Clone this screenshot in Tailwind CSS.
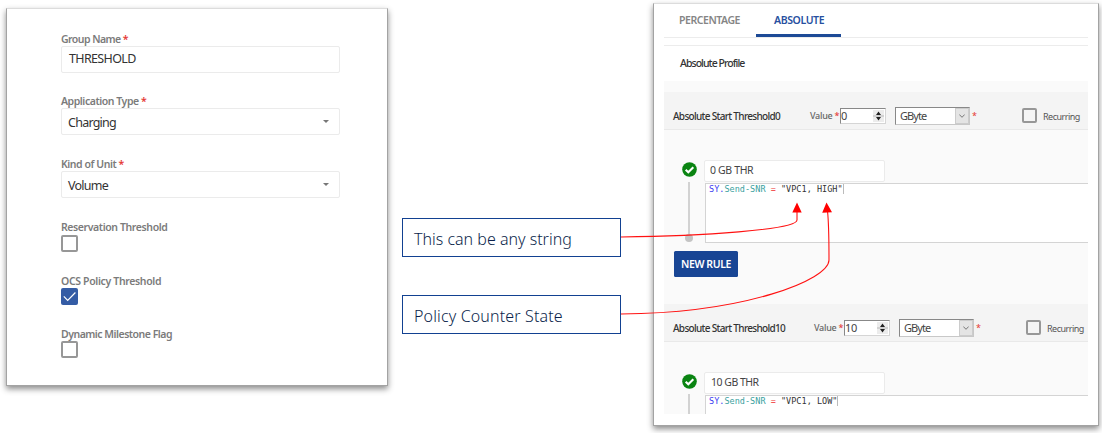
<!DOCTYPE html>
<html lang="en">
<head>
<meta charset="utf-8">
<title>Threshold group</title>
<script src="https://cdn.jsdelivr.net/npm/@tailwindcss/browser@4"></script>
</head>
<body class="relative flex h-[433px] w-[1102px] items-start overflow-hidden bg-white font-['Noto_Sans',sans-serif] whitespace-nowrap">

<!-- Group form -->
<section class="mt-2 ml-1.5 h-[378px] w-[382px] shrink-0 border border-[#a3a3a3] border-t-[#dcdcdc] bg-white pt-[23px] pl-[54px] shadow-[0_3px_6px_rgba(0,0,0,0.45)]">
  <div class="flex h-[62px] flex-col">
    <label class="h-[14px] text-[10.5px] leading-[14px] font-semibold tracking-[-0.55px] text-[#7b7b7b]">Group Name <span class="text-[#e53935]">*</span></label>
    <div class="h-[27px] w-[279px] rounded-[2px] border border-[#ebebeb] pl-[7px] text-[12.5px] leading-[23px] tracking-[-0.65px] text-[#333]">THRESHOLD</div>
  </div>
  <div class="flex h-[63px] flex-col">
    <label class="h-[14px] text-[10.5px] leading-[14px] font-semibold tracking-[-0.45px] text-[#7b7b7b]">Application Type <span class="text-[#e53935]">*</span></label>
    <div class="flex h-[27px] w-[279px] items-center justify-between rounded-[2px] border border-[#ebebeb] pr-2.5 pl-1.5 text-[12.5px] leading-[23px] tracking-[-0.75px] text-[#333]"><span class="pt-0.5">Charging</span><svg class="h-[3px] w-[6px]" viewBox="0 0 6 3"><path d="M0 0h6L3 3z" fill="#777"/></svg></div>
  </div>
  <div class="flex h-[63px] flex-col">
    <label class="h-[14px] text-[10.5px] leading-[14px] font-semibold tracking-[-0.45px] text-[#7b7b7b]">Kind of Unit <span class="text-[#e53935]">*</span></label>
    <div class="flex h-[27px] w-[279px] items-center justify-between rounded-[2px] border border-[#ebebeb] pr-2.5 pl-1.5 text-[12.5px] leading-[23px] tracking-[-0.75px] text-[#333]"><span class="pt-0.5">Volume</span><svg class="h-[3px] w-[6px]" viewBox="0 0 6 3"><path d="M0 0h6L3 3z" fill="#777"/></svg></div>
  </div>
  <div class="flex h-[54px] flex-col">
    <label class="h-[14px] text-[10.5px] leading-[14px] font-semibold tracking-[-0.4px] text-[#7b7b7b]">Reservation Threshold</label>
    <div class="mt-px size-[17px] rounded-[2px] border-2 border-[#979797]"></div>
  </div>
  <div class="flex h-[53px] flex-col">
    <label class="h-[14px] text-[10.5px] leading-[14px] font-semibold tracking-[-0.35px] text-[#7b7b7b]">OCS Policy Threshold</label>
    <div class="size-[17px] rounded-[2px] bg-[#345ca5]"><svg class="size-[17px]" viewBox="0 0 17 17" fill="none" stroke="#fff" stroke-width="1.2"><path d="M2.8 8.3l3.9 4L14.400 4.500"/></svg></div>
  </div>
  <div class="flex flex-col">
    <label class="h-[14px] text-[10.5px] leading-[14px] font-semibold tracking-[-0.5px] text-[#7b7b7b]">Dynamic Milestone Flag</label>
    <div class="size-[17px] rounded-[2px] border-2 border-[#979797]"></div>
  </div>
</section>

<!-- Callouts -->
<div class="mt-[218px] ml-3.5 flex w-[219px] shrink-0 flex-col gap-[38px] text-[16px] leading-[40px] font-light text-[#0b1f4b]">
  <div class="h-[39px] border border-[#124191] pl-[11px]">This can be any string</div>
  <div class="h-[39px] border border-[#124191] pl-[11px] tracking-[0.15px]">Policy Counter State</div>
</div>

<!-- Threshold profile -->
<section class="mt-[3px] ml-8 h-[423px] w-[446px] shrink-0 border border-[#a3a3a3] border-t-[#dcdcdc] bg-white pl-[10px] shadow-[0_3px_6px_rgba(0,0,0,0.45)]">
  <div class="flex h-[410px] w-[424px] flex-col overflow-hidden">
    <nav class="flex h-[34px] shrink-0 border-b border-[#ececec] text-[10.5px] leading-[32px] font-semibold">
      <div class="w-[92px] pl-[15px] tracking-[-0.45px] text-[#858585]">PERCENTAGE</div>
      <div class="h-[33px] w-[85px] border-b-[3px] border-[#1d4a96] pl-[18px] tracking-[-0.4px] text-[#2750a0]">ABSOLUTE</div>
    </nav>
    <div class="mt-[7px] h-9 shrink-0 border-t border-[#ececec] pl-4 text-[10.5px] leading-[35px] font-medium tracking-[-0.95px] text-[#333]">Absolute Profile</div>
    <div class="h-[11px] shrink-0 bg-[#fafafa]"></div>

    <div class="flex h-[38px] shrink-0 items-center border-b border-[#e9e9e9] bg-[#f4f4f4] pt-2.5 text-[10px] leading-4">
      <span class="w-[145px] pl-[9px] font-medium tracking-[-0.68px] text-[#333]">Absolute Start Threshold0</span>
      <span class="w-[31px] pl-px text-[9px] font-medium tracking-[-0.25px] text-[#666]">Value <span class="text-[#e53935]">*</span></span>
      <div class="flex h-4 w-[46px] items-center justify-between border border-[#d5d5d5] border-t-[#888] border-l-[#888] bg-white pr-px text-[11px] leading-[14px] text-[#444]"><span>0</span><svg class="h-3 w-[11px] bg-[#ececec]" viewBox="0 0 11 12" fill="#222"><path d="M5.500 1.500L8 5H3zM5.500 10.500L8 7H3z"/><path d="M0 6h11" stroke="#999" stroke-width=".6"/></svg></div>
      <div class="ml-[9px] flex h-[18px] w-[75px] items-center justify-between border border-[#c8c8c8] border-t-[#888] border-l-[#888] bg-white pl-1 text-[11px] leading-4 tracking-[-0.95px] text-[#444]"><span>GByte</span><span class="flex h-4 w-[14px] items-center justify-center border border-[#ccc] bg-[#e4e4e4]"><svg class="h-1 w-1.5" viewBox="0 0 6 4" fill="none" stroke="#777"><path d="M.3.5L3 3.3 5.700.5"/></svg></span></div>
      <span class="ml-[2px] w-[50px] text-[9px] text-[#e53935]">*</span>
      <div class="size-[15px] rounded-[2px] border-2 border-[#979797]"></div>
      <span class="ml-1.5 pt-0.5 text-[9px] tracking-[-0.5px] text-[#555]">Recurring</span>
    </div>

    <div class="flex h-[174px] shrink-0 flex-col bg-[#fafafa] pt-[30px]">
      <div class="flex">
        <div class="flex w-10 flex-col items-center pl-[10px]">
          <svg class="mt-0.5 h-[15px] w-[15px] shrink-0" viewBox="0 0 15 15"><circle cx="7.500" cy="7.500" r="7.300" fill="#0a8412"/><path d="M3.700 7.700l2.600 2.600 5-5.100" fill="none" stroke="#fff" stroke-width="2.100"/></svg>
          <div class="mt-[5px] h-[53px] w-[2px] bg-[#d2d2d2]"></div>
          <div class="-mt-px size-2 rounded-full bg-[#c4c4c4]"></div>
        </div>
        <div class="grow">
          <div class="h-[22px] w-[181px] rounded-[2px] border border-[#ebebeb] bg-white pl-[5px] text-[10.5px] leading-[19px] tracking-[-0.35px] text-[#444]">0 GB THR</div>
          <div class="mt-px ml-px h-[60px] border border-r-0 border-[#d4d4d4] bg-white pl-[3px] font-['DejaVu_Sans_Mono',monospace] text-[8.5px] leading-[11px] tracking-[0.02px] text-[#333]"><span class="text-[#3a3af0]">SY.</span><span class="text-[#3a9fa0]">Send-SNR</span> <span class="text-[#f03030]">=</span> "VPC1, HIGH"<span class="border-r border-[#bbb]"></span></div>
        </div>
      </div>
      <div class="mt-2 ml-2.5 h-[26px] w-16 rounded-[1.5px] bg-[#184594] text-center text-[10.5px] leading-[26px] font-semibold tracking-[-0.4px] text-white">NEW RULE</div>
    </div>

    <div class="flex h-[38px] shrink-0 items-center border-b border-[#e9e9e9] bg-[#f4f4f4] pt-2.5 text-[10px] leading-4">
      <span class="w-[149px] pl-[9px] font-medium tracking-[-0.68px] text-[#333]">Absolute Start Threshold10</span>
      <span class="w-[31px] pl-px text-[9px] font-medium tracking-[-0.25px] text-[#666]">Value <span class="text-[#e53935]">*</span></span>
      <div class="flex h-4 w-[46px] items-center justify-between border border-[#d5d5d5] border-t-[#888] border-l-[#888] bg-white pr-px text-[11px] leading-[14px] tracking-[-0.4px] text-[#444]"><span>10</span><svg class="h-3 w-[11px] bg-[#ececec]" viewBox="0 0 11 12" fill="#222"><path d="M5.500 1.500L8 5H3zM5.500 10.500L8 7H3z"/><path d="M0 6h11" stroke="#999" stroke-width=".6"/></svg></div>
      <div class="ml-[9px] flex h-[18px] w-[75px] items-center justify-between border border-[#c8c8c8] border-t-[#888] border-l-[#888] bg-white pl-1 text-[11px] leading-4 tracking-[-0.95px] text-[#444]"><span>GByte</span><span class="flex h-4 w-[14px] items-center justify-center border border-[#ccc] bg-[#e4e4e4]"><svg class="h-1 w-1.5" viewBox="0 0 6 4" fill="none" stroke="#777"><path d="M.3.5L3 3.3 5.700.5"/></svg></span></div>
      <span class="ml-[2px] w-[50px] text-[9px] text-[#e53935]">*</span>
      <div class="size-[15px] rounded-[2px] border-2 border-[#979797]"></div>
      <span class="ml-1.5 pt-0.5 text-[9px] tracking-[-0.5px] text-[#555]">Recurring</span>
    </div>

    <div class="flex h-[72px] shrink-0 bg-[#fafafa] pt-[30px]">
      <div class="flex w-10 flex-col items-center pl-[10px]">
        <svg class="mt-0.5 h-[15px] w-[15px] shrink-0" viewBox="0 0 15 15"><circle cx="7.500" cy="7.500" r="7.300" fill="#0a8412"/><path d="M3.700 7.700l2.600 2.600 5-5.100" fill="none" stroke="#fff" stroke-width="2.100"/></svg>
        <div class="mt-[5px] h-[54px] w-[2px] shrink-0 bg-[#d2d2d2]"></div>
      </div>
      <div class="grow">
        <div class="h-[22px] w-[181px] rounded-[2px] border border-[#ebebeb] bg-white pl-1.5 text-[10.5px] leading-[19px] tracking-[-0.5px] text-[#444]">10 GB THR</div>
        <div class="mt-px ml-px h-[60px] border border-r-0 border-[#d4d4d4] bg-white pl-[3px] font-['DejaVu_Sans_Mono',monospace] text-[8.5px] leading-[11px] tracking-[0.02px] text-[#333]"><span class="text-[#3a3af0]">SY.</span><span class="text-[#3a9fa0]">Send-SNR</span> <span class="text-[#f03030]">=</span> "VPC1, LOW"<span class="border-r border-[#bbb]"></span></div>
      </div>
    </div>
  </div>
</section>

<!-- Connectors from callouts to code -->
<svg class="pointer-events-none absolute inset-0 h-[433px] w-[1102px]" viewBox="0 0 1102 433" fill="none" stroke="#f11" stroke-width="1.1">
  <path d="M621 237C700 236 797 230 797 220V210"/>
  <path d="M621 314C745 313 829 280 829 260Q829 225 827.500 211"/>
  <path d="M797 202.500l4.700 10h-9.400zM826.500 202.500l5.500 9.700-9.800.600z" fill="#f00" stroke="none"/>
</svg>
</body>
</html>
